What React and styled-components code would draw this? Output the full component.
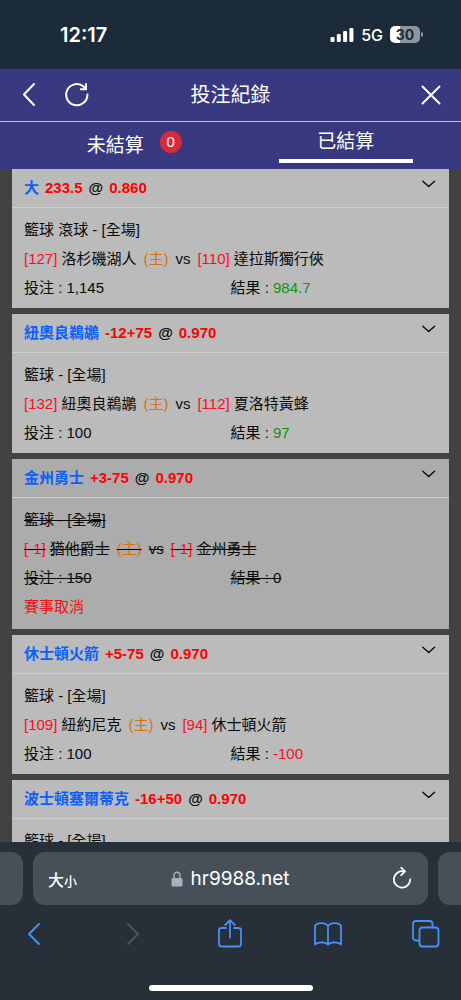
import React from "react";
import styled, { createGlobalStyle } from "styled-components";

const GlobalStyle = createGlobalStyle`
  * { box-sizing: border-box; }
  body { margin: 0; background: #424242; }
  button, input {
    border: 0;
    padding: 0;
    margin: 0;
    background: none;
    font: inherit;
    color: inherit;
    cursor: pointer;
  }
  svg { display: block; }
`;

const Screen = styled.div`
  display: flex;
  flex-direction: column;
  height: 100vh;
  background: #424242;
  color: #0a0a0a;
  font-family: "Liberation Sans", "Noto Sans CJK TC", sans-serif;
  font-size: 15px;
`;

const StatusBar = styled.div`
  display: flex;
  flex: none;
  align-items: center;
  justify-content: space-between;
  height: 69px;
  padding: 0 38px 0 60px;
  background: #1b2b3a;
  color: #fff;
  font-family: Inter, sans-serif;
`;

const Clock = styled.time`
  font-size: 20px;
  font-weight: 600;
`;

const Signals = styled.div`
  display: flex;
  align-items: center;
  gap: 7px;
  font-size: 16px;
  font-weight: 500;
`;

const Battery = styled.div`
  display: flex;
  align-items: center;
  gap: 1px;
`;

const BatteryLevel = styled.span`
  width: 30px;
  height: 17px;
  border-radius: 5px;
  background: linear-gradient(to right, #fff 33%, #8e959c 33%);
  color: #1b2b3a;
  font-size: 14px;
  font-weight: 700;
  line-height: 17px;
  text-align: center;
`;

const BatteryTip = styled.span`
  width: 2px;
  height: 5px;
  border-radius: 0 2px 2px 0;
  background: #8e959c;
`;

const Header = styled.header`
  display: grid;
  flex: none;
  grid-template-columns: 1fr auto 1fr;
  align-items: center;
  height: 53px;
  padding: 0 20px;
  border-bottom: 1px solid #c3c3dc;
  background: #383980;
  color: #fff;
`;

const HeaderActions = styled.div`
  display: flex;
  gap: 26px;
  justify-content: ${(p) => (p.$end ? "flex-end" : "flex-start")};
`;

const Title = styled.h1`
  margin: 0;
  font-size: 20px;
  font-weight: 400;
  line-height: 28px;
`;

const Tabs = styled.nav`
  display: grid;
  flex: none;
  grid-template-columns: 1fr 1fr;
  height: 47px;
  background: #383980;
  color: #fff;
`;

const Tab = styled.button`
  display: flex;
  flex-direction: column;
  align-items: center;
  justify-content: center;
  gap: 3px;
  font-size: 19px;
  line-height: 28px;

  &[aria-selected="true"]::after {
    content: "";
    width: 58%;
    height: 4px;
    background: #fff;
  }
`;

const TabLabel = styled.span`
  position: relative;
`;

const Badge = styled.span`
  position: absolute;
  top: -1px;
  left: 100%;
  width: 22px;
  height: 22px;
  margin-left: 16px;
  border-radius: 50%;
  background: #d92b37;
  font-size: 15px;
  line-height: 22px;
  text-align: center;
`;

const BetList = styled.main`
  display: flex;
  flex: 1;
  flex-direction: column;
  gap: 6px;
  min-height: 0;
  padding: 0 12px;
  overflow-y: auto;
  scrollbar-width: none;
`;

const Card = styled.article`
  flex: none;
  background: ${(p) => (p.$void ? "#acacac" : "#bbb")};
`;

const CardHead = styled.div`
  display: flex;
  align-items: center;
  justify-content: space-between;
  height: 39px;
  padding: 0 12px;
  border-bottom: 1px solid #cecece;
`;

const Pick = styled.h2`
  display: flex;
  gap: 6px;
  margin: 0;
  font-size: 15px;
  font-weight: 700;
  line-height: 28px;
`;

const PickName = styled.span`
  color: #0a60ff;
`;

const Odds = styled.span`
  color: #f00;
`;

const Expand = styled.button`
  display: flex;
  height: 29px;
  padding-top: 3px;
`;

const CardBody = styled.div`
  padding: 7px 12px 6px;
  line-height: 29px;
`;

const Details = styled.div`
  text-decoration: ${(p) => (p.$void ? "line-through" : "none")};
`;

const Line = styled.div`
  display: flex;
  gap: 7px;
`;

const Side = styled.div`
  display: flex;
  gap: 4px;
`;

const Number = styled.span`
  color: #fb0d1b;
`;

const Home = styled.span`
  color: #d9720c;
`;

const Amounts = styled.div`
  display: grid;
  grid-template-columns: 1fr 1fr;
`;

const tones = { win: "#0b940b", loss: "#fb0d1b", none: "inherit" };

const Result = styled.span`
  color: ${(p) => tones[p.$tone]};
`;

const Notice = styled.div`
  padding-bottom: 2px;
  color: #f01414;
`;

const Browser = styled.footer`
  flex: none;
  padding: 10px 0 9px;
  background: #272f38;
  color: #fff;
`;

const AddressRow = styled.div`
  display: flex;
  gap: 10px;
  height: 53px;
`;

const NeighbourTab = styled.div`
  flex: 0 0 23px;
  border-radius: ${(p) => (p.$side === "left" ? "0 12px 12px 0" : "12px 0 0 12px")};
  background: #474f59;
`;

const AddressBar = styled.div`
  display: grid;
  flex: 1;
  grid-template-columns: 1fr auto 1fr;
  align-items: center;
  padding: 0 15px;
  border-radius: 12px;
  background: #474f59;
`;

const TextSize = styled.button`
  justify-self: start;
  font-size: 16px;
  font-weight: 500;
`;

const SmallGlyph = styled.span`
  font-size: 13px;
`;

const Address = styled.label`
  display: flex;
  align-items: center;
  gap: 8px;
`;

const AddressInput = styled.input`
  width: 100px;
  font-family: Inter, sans-serif;
  font-size: 19px;
  line-height: 24px;
  outline: none;
`;

const Reload = styled.button`
  justify-self: end;
`;

const Toolbar = styled.nav`
  display: flex;
  align-items: center;
  justify-content: space-between;
  height: 58px;
  padding: 0 21px 0 20px;
  color: #4590f7;
`;

const ToolButton = styled.button`
  &:disabled {
    color: #4c545d;
  }
`;

const HomeIndicator = styled.div`
  width: 164px;
  height: 6px;
  margin: 22px auto 0;
  border-radius: 3px;
  background: #fff;
`;

function Icon({ width, height, stroke = 2, join = "round", children }) {
  return (
    <svg
      width={width}
      height={height}
      viewBox={`0 0 ${width} ${height}`}
      fill="none"
      stroke="currentColor"
      strokeWidth={stroke}
      strokeLinecap="round"
      strokeLinejoin={join}
      aria-hidden="true"
    >
      {children}
    </svg>
  );
}

const bets = [
  {
    pick: "大", line: "233.5", odds: "0.860", type: "籃球 滾球 - [全場]",
    home: ["[127]", "洛杉磯湖人"], away: ["[110]", "達拉斯獨行俠"],
    stake: "1,145", result: "984.7", tone: "win",
  },
  {
    pick: "紐奧良鵜鶘", line: "-12+75", odds: "0.970", type: "籃球 - [全場]",
    home: ["[132]", "紐奧良鵜鶘"], away: ["[112]", "夏洛特黃蜂"],
    stake: "100", result: "97", tone: "win",
  },
  {
    pick: "金州勇士", line: "+3-75", odds: "0.970", type: "籃球 - [全場]",
    home: ["[-1]", "猶他爵士"], away: ["[-1]", "金州勇士"],
    stake: "150", result: "0", tone: "none", notice: "賽事取消",
  },
  {
    pick: "休士頓火箭", line: "+5-75", odds: "0.970", type: "籃球 - [全場]",
    home: ["[109]", "紐約尼克"], away: ["[94]", "休士頓火箭"],
    stake: "100", result: "-100", tone: "loss",
  },
  { pick: "波士頓塞爾蒂克", line: "-16+50", odds: "0.970", type: "籃球 - [全場]" },
];

function Team({ team }) {
  return (
    <Side>
      <Number>{team[0]}</Number>
      <span>{team[1]}</span>
    </Side>
  );
}

function Bet({ bet }) {
  const isVoid = Boolean(bet.notice);
  return (
    <Card $void={isVoid}>
      <CardHead>
        <Pick>
          <PickName>{bet.pick}</PickName>
          <Odds>{bet.line}</Odds>
          <span>@</span>
          <Odds>{bet.odds}</Odds>
        </Pick>
        <Expand aria-label="展開">
          <Icon width={17} height={14} stroke={1.4}>
            <path d="M2.8 4.2 L8.7 9.6 L14.6 4.2" />
          </Icon>
        </Expand>
      </CardHead>
      <CardBody>
        <Details $void={isVoid}>
          <div>{bet.type}</div>
          {bet.home && (
            <>
              <Line>
                <Team team={bet.home} />
                <Home>(主)</Home>
                <span>vs</span>
                <Team team={bet.away} />
              </Line>
              <Amounts>
                <span>投注 : {bet.stake}</span>
                <span>
                  結果 : <Result $tone={bet.tone}>{bet.result}</Result>
                </span>
              </Amounts>
            </>
          )}
        </Details>
        {bet.notice && <Notice>{bet.notice}</Notice>}
      </CardBody>
    </Card>
  );
}

export default function App() {
  return (
    <Screen lang="zh-Hant">
      <GlobalStyle />
      <StatusBar>
        <Clock>12:17</Clock>
        <Signals>
          <svg width="24" height="16" viewBox="0 0 24 16" fill="#fff" aria-hidden="true">
            <rect x="0.5" y="10" width="4" height="5" rx="1" />
            <rect x="6.8" y="7" width="4" height="8" rx="1" />
            <rect x="13.1" y="4" width="4" height="11" rx="1" />
            <rect x="19.4" y="1" width="4" height="14" rx="1" />
          </svg>
          <span>5G</span>
          <Battery>
            <BatteryLevel>30</BatteryLevel>
            <BatteryTip />
          </Battery>
        </Signals>
      </StatusBar>

      <Header>
        <HeaderActions>
          <button aria-label="返回">
            <Icon width={18} height={26}>
              <path d="M14 2 L4 12.5 L14 23" />
            </Icon>
          </button>
          <button aria-label="重新整理">
            <Icon width={26} height={26} join="miter">
              <path d="M23.4 12.4 A10.6 10.6 0 1 1 19.4 4.4 L21.6 6.8" />
              <path d="M22 2 V7.2 H16.8" />
            </Icon>
          </button>
        </HeaderActions>
        <Title>投注紀錄</Title>
        <HeaderActions $end>
          <button aria-label="關閉">
            <Icon width={20} height={20}>
              <path d="M1.5 1.5 L18.5 18.5 M18.5 1.5 L1.5 18.5" />
            </Icon>
          </button>
        </HeaderActions>
      </Header>

      <Tabs role="tablist">
        <Tab role="tab" aria-selected="false">
          <TabLabel>
            未結算<Badge>0</Badge>
          </TabLabel>
        </Tab>
        <Tab role="tab" aria-selected="true">
          <TabLabel>已結算</TabLabel>
        </Tab>
      </Tabs>

      <BetList>
        {bets.map((bet) => (
          <Bet key={bet.pick} bet={bet} />
        ))}
      </BetList>

      <Browser>
        <AddressRow>
          <NeighbourTab $side="left" />
          <AddressBar>
            <TextSize>
              大<SmallGlyph>小</SmallGlyph>
            </TextSize>
            <Address>
              <svg width="12" height="16" viewBox="0 0 12 16" aria-hidden="true">
                <path d="M3 8 V4.2 A3 3 0 0 1 9 4.2 V8" fill="none" stroke="#a9b0bb" strokeWidth="1.4" />
                <rect x="0.5" y="7" width="11" height="8.6" rx="1.6" fill="#a9b0bb" />
              </svg>
              <AddressInput type="text" aria-label="網址" defaultValue="hr9988.net" />
            </Address>
            <Reload aria-label="重新載入">
              <Icon width={22} height={26} stroke={1.8}>
                <path d="M13.4 5.6 A8.2 8.2 0 1 0 19.2 13.4" />
                <path d="M10.2 1.6 L14 5.4 L10.2 9.2" />
              </Icon>
            </Reload>
          </AddressBar>
          <NeighbourTab $side="right" />
        </AddressRow>
        <Toolbar>
          <ToolButton aria-label="上一頁">
            <Icon width={28} height={28}>
              <path d="M19 4 L9 14 L19 24" />
            </Icon>
          </ToolButton>
          <ToolButton aria-label="下一頁" disabled>
            <Icon width={28} height={28}>
              <path d="M10 4 L20 14 L10 24" />
            </Icon>
          </ToolButton>
          <ToolButton aria-label="分享">
            <Icon width={28} height={30} stroke={1.8}>
              <path d="M10 9 H5.5 A2.5 2.5 0 0 0 3 11.5 V25 A2.5 2.5 0 0 0 5.5 27.5 H22.5 A2.5 2.5 0 0 0 25 25 V11.5 A2.5 2.5 0 0 0 22.5 9 H18" />
              <path d="M14 18.5 V1.5 M9.2 6 L14 1.2 L18.8 6" />
            </Icon>
          </ToolButton>
          <ToolButton aria-label="書籤">
            <Icon width={28} height={28} stroke={1.8}>
              <path d="M14 6 C12 2.6 3.5 1.8 1 6 V24.5 C4 21.6 11 21.6 14 24.5 C17 21.6 24 21.6 27 24.5 V6 C24.5 1.8 16 2.6 14 6 Z M14 6 V24.5" />
            </Icon>
          </ToolButton>
          <ToolButton aria-label="分頁">
            <Icon width={28} height={28} stroke={1.8}>
              <rect x="7.5" y="7.5" width="19" height="19" rx="3" />
              <path d="M7.5 20.5 H4 A3 3 0 0 1 1 17.5 V4 A3 3 0 0 1 4 1 H17.5 A3 3 0 0 1 20.5 4 V7.5" />
            </Icon>
          </ToolButton>
        </Toolbar>
        <HomeIndicator />
      </Browser>
    </Screen>
  );
}
